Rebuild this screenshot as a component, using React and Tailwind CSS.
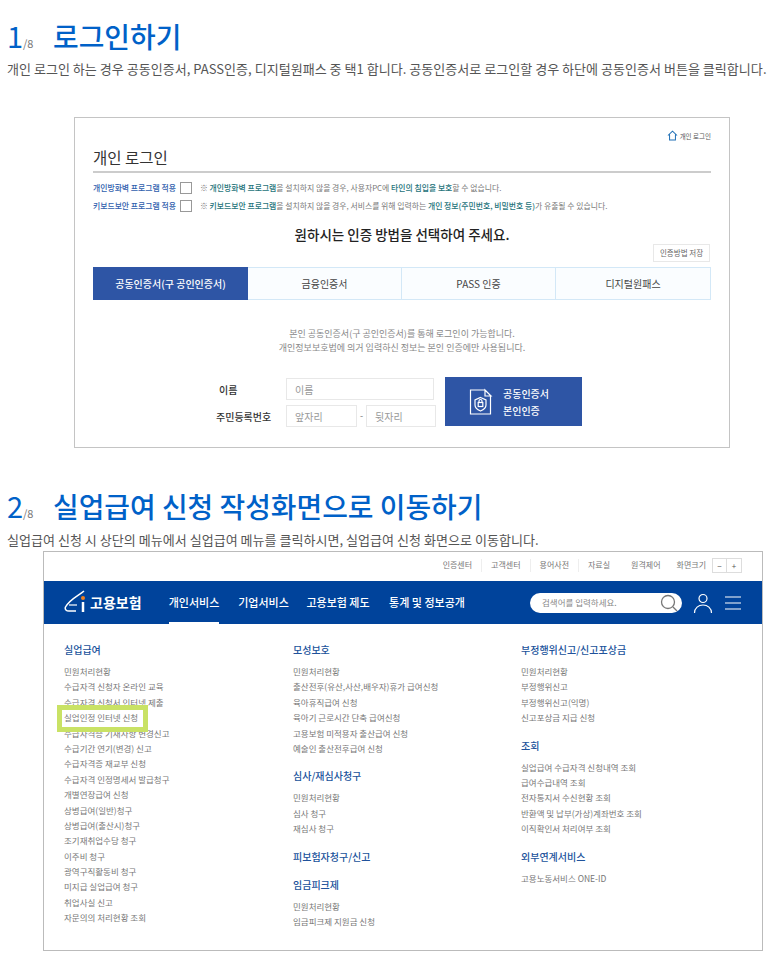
const font = { fontFamily: '"Noto Sans CJK KR", "Noto Sans", sans-serif' }

const columns = [
  [
    {
      title: '실업급여',
      items: [
        '민원처리현황',
        '수급자격 신청자 온라인 교육',
        '수급자격 신청서 인터넷 제출',
        '실업인정 인터넷 신청',
        '수급자격증 기재사항 변경신고',
        '수급기간 연기(변경) 신고',
        '수급자격증 재교부 신청',
        '수급자격 인정명세서 발급청구',
        '개별연장급여 신청',
        '상병급여(일반)청구',
        '상병급여(출산시)청구',
        '조기재취업수당 청구',
        '이주비 청구',
        '광역구직활동비 청구',
        '미지급 실업급여 청구',
        '취업사실 신고',
        '자문의의 처리현황 조회',
      ],
    },
  ],
  [
    {
      title: '모성보호',
      items: [
        '민원처리현황',
        '출산전후(유산,사산,배우자)휴가 급여신청',
        '육아휴직급여 신청',
        '육아기 근로시간 단축 급여신청',
        '고용보험 미적용자 출산급여 신청',
        '예술인 출산전후급여 신청',
      ],
    },
    { title: '심사/재심사청구', items: ['민원처리현황', '심사 청구', '재심사 청구'] },
    { title: '피보험자청구/신고', items: [] },
    { title: '임금피크제', items: ['민원처리현황', '임금피크제 지원금 신청'] },
  ],
  [
    {
      title: '부정행위신고/신고포상금',
      items: ['민원처리현황', '부정행위신고', '부정행위신고(익명)', '신고포상금 지급 신청'],
    },
    {
      title: '조회',
      items: [
        '실업급여 수급자격 신청내역 조회',
        '급여수급내역 조회',
        '전자통지서 수신현황 조회',
        '반환액 및 납부(가상)계좌번호 조회',
        '이직확인서 처리여부 조회',
      ],
    },
    { title: '외부연계서비스', items: ['고용노동서비스 ONE-ID'] },
  ],
]

function StepTitle({ num, title }) {
  return (
    <div className="flex items-baseline pl-[7px] text-[#0061c8]">
      <span className="w-[16px] text-[29px] leading-[38px]">{num}</span>
      <span className="w-[30px] text-[11px] text-[#777]">/8</span>
      <h2 className="text-[27.9px] font-medium leading-[38px] whitespace-nowrap">{title}</h2>
    </div>
  )
}

function NoticeRow({ label, children }) {
  return (
    <div className="flex h-[18px] items-center whitespace-nowrap text-[7.85px]">
      <span className="w-[87px] font-medium text-[#2f5ead]">{label}</span>
      <span className="h-[12px] w-[12px] border border-[#999] bg-white" />
      <span className="ml-[8px] text-[#777]">{children}</span>
    </div>
  )
}

function Mark({ children }) {
  return <b className="font-medium text-[#24737a]">{children}</b>
}

function Field({ placeholder, className }) {
  return (
    <div className={`flex h-[22px] items-center border border-[#e8e8e8] pl-[8px] text-[10px] text-[#999] ${className}`}>
      {placeholder}
    </div>
  )
}

function MenuGroup({ title, items }) {
  return (
    <div className="mb-[12px]">
      <h3 className="text-[10px] font-medium leading-[16px] text-[#20529b]">{title}</h3>
      {items.length > 0 && (
        <ul className="mt-[6px]">
          {items.map((item) => (
            <li key={item} className="h-[15.4px] whitespace-nowrap text-[8.5px] leading-[15.4px] text-[#777]">
              {item}
            </li>
          ))}
        </ul>
      )}
    </div>
  )
}

export default function App() {
  return (
    <div className="h-[957px] w-[783px] overflow-hidden bg-white" style={font}>
      <div className="pt-[16px]">
        <StepTitle num="1" title="로그인하기" />
        <p className="mt-[4px] whitespace-nowrap pl-[7px] text-[13.05px] leading-[20px] text-[#555]">
          개인 로그인 하는 경우 공동인증서, PASS인증, 디지털원패스 중 택1 합니다. 공동인증서로 로그인할 경우 하단에 공동인증서 버튼을 클릭합니다.
        </p>
      </div>

      <section className="ml-[74px] mt-[38px] h-[331px] w-[656px] border border-[#c4c4c4] px-[18px]">
        <div className="flex h-[24px] items-end justify-end gap-[2px] text-[6.5px] text-[#555]">
          <svg width="11" height="11" viewBox="0 0 12 12" fill="none" stroke="#1f6fb5" strokeWidth="1.1" className="mb-[1px]">
            <path d="M1 6 6 1.2 11 6M2.8 5v6h6.4V5" />
          </svg>
          <span className="leading-[12px]">개인 로그인</span>
        </div>
        <h2 className="mt-[3px] border-b-2 border-[#ccc] pb-[2px] text-[15.5px] leading-[24px] text-[#333]">개인 로그인</h2>

        <div className="mt-[6px]">
          <NoticeRow label="개인방화벽 프로그램 적용">
            ※ <Mark>개인방화벽 프로그램</Mark>을 설치하지 않을 경우, 사용자PC에 <Mark>타인의 침입을 보호</Mark>할 수 없습니다.
          </NoticeRow>
          <NoticeRow label="키보드보안 프로그램 적용">
            ※ <Mark>키보드보안 프로그램</Mark>을 설치하지 않을 경우, 서비스를 위해 입력하는 <Mark>개인 정보(주민번호, 비밀번호 등)</Mark>가 유출될 수 있습니다.
          </NoticeRow>
        </div>

        <p className="mt-[8px] text-center text-[13.5px] font-medium leading-[22px] text-[#222]">원하시는 인증 방법을 선택하여 주세요.</p>

        <div className="-mt-[1px] flex justify-end pr-px">
          <span className="flex h-[18px] w-[57px] items-center justify-center border border-[#e8e8e8] text-[7.5px] text-[#666]">인증방법 저장</span>
        </div>

        <div className="mt-[5px] grid h-[33px] grid-cols-[155px_154px_154px_155px] border-y border-[#d3e8f7] text-center text-[10px] leading-[31px] text-[#444]">
          <div className="-my-px h-[33px] bg-[#2e55a5] font-medium leading-[33px] text-white">공동인증서(구 공인인증서)</div>
          <div className="border-r border-[#d3e8f7] bg-[#fafdff]">금융인증서</div>
          <div className="border-r border-[#d3e8f7] bg-[#fafdff]">PASS 인증</div>
          <div className="border-r border-[#d3e8f7] bg-[#fafdff]">디지털원패스</div>
        </div>

        <div className="mt-[27px] text-center text-[9px] leading-[14px] text-[#888]">
          <p>본인 공동인증서(구 공인인증서)를 통해 로그인이 가능합니다.</p>
          <p>개인정보보호법에 의거 입력하신 정보는 본인 인증에만 사용됩니다.</p>
        </div>

        <div className="mt-[23px] flex">
          <div className="ml-[123px] w-[70px] text-[10px] font-medium text-[#333]">
            <div className="flex h-[22px] items-center pl-[3px]">이름</div>
            <div className="mt-[5px] flex h-[22px] items-center whitespace-nowrap">주민등록번호</div>
          </div>
          <div>
            <Field placeholder="이름" className="w-[148px]" />
            <div className="mt-[5px] flex items-center">
              <Field placeholder="앞자리" className="w-[71px]" />
              <span className="w-[9px] text-center text-[9px] text-[#777]">-</span>
              <Field placeholder="뒷자리" className="w-[70px]" />
            </div>
          </div>
          <button className="-mt-[1px] ml-[9px] flex h-[49px] w-[137px] items-center bg-[#2e55a5] pl-[24px] text-left text-[10px] font-medium leading-[17px] text-white">
            <svg width="24" height="28" viewBox="0 0 24 28" fill="none" stroke="white" strokeWidth="1.2" className="mr-[10px]">
              <path d="M16 2H1.5v24h20V8M16 2v6h6z" />
              <path d="M11.5 9.5 17 12v5c0 3-3 5-5.5 6C9 22 6 20 6 17v-5z" />
              <rect x="9.2" y="14.5" width="4.6" height="4" />
              <path d="M10 14.5v-1.5a1.5 1.5 0 0 1 3 0v1.5" />
            </svg>
            <span>
              공동인증서
              <br />
              본인인증
            </span>
          </button>
        </div>
      </section>

      <div className="mb-px mt-[38px]">
        <StepTitle num="2" title="실업급여 신청 작성화면으로 이동하기" />
        <p className="mt-[5px] whitespace-nowrap pl-[7px] text-[13.05px] leading-[20px] text-[#555]">
          실업급여 신청 시 상단의 메뉴에서 실업급여 메뉴를 클릭하시면, 실업급여 신청 화면으로 이동합니다.
        </p>
      </div>

      <section className="relative ml-[43px] h-[400px] w-[720px] border border-[#bbb]">
        <div className="flex h-[29px] items-center justify-end pb-[3px] pr-[20px] text-[8px] text-[#777]">
          <span>인증센터</span>
          <span className="mx-[9px] h-[13px] w-px bg-[#eee]" />
          <span>고객센터</span>
          <span className="mx-[9px] h-[13px] w-px bg-[#eee]" />
          <span>용어사전</span>
          <span className="mx-[9px] h-[13px] w-px bg-[#eee]" />
          <span>자료실</span>
          <span className="ml-[21px]">원격제어</span>
          <span className="ml-[16px]">화면크기</span>
          <span className="ml-[6px] flex h-[15px] w-[30px] border border-[#ddd] text-center leading-[13px] text-[#555]">
            <span className="w-1/2 border-r border-[#ddd]">−</span>
            <span className="w-1/2">+</span>
          </span>
        </div>

        <div className="flex h-[43px] items-center bg-[#00439b] text-white">
          <svg width="24" height="26" viewBox="0 0 24 26" fill="none" className="ml-[20px]">
            <path d="M20 1C14 6 6 9 1.5 17c-1 2.500 1 4 3.500 4h7" stroke="white" strokeWidth="1.5" />
            <path d="M5 15h8" stroke="white" strokeWidth="1.2" />
            <path d="M19 12v10" stroke="white" strokeWidth="2.500" />
            <circle cx="19" cy="8" r="2" fill="#f07f1f" />
          </svg>
          <span className="ml-[2px] w-[69px] text-[14px] font-bold">고용보험</span>
          <nav className="flex h-full text-[11px] font-medium leading-[43px]">
            <span className="relative w-[70px] text-center">
              개인서비스
              <span className="absolute bottom-0 left-[10px] h-[2px] w-[50px] bg-white" />
            </span>
            <span className="w-[69px] text-center">기업서비스</span>
            <span className="w-[80px] text-center">고용보험 제도</span>
            <span className="w-[98px] text-center">통계 및 정보공개</span>
          </nav>
          <div className="ml-[54px] flex h-[20px] w-[152px] items-center justify-between rounded-full bg-white pl-[12px] pr-[4px] text-[8.500px] text-[#888]">
            검색어를 입력하세요.
            <svg width="18" height="18" viewBox="0 0 18 18" fill="none" stroke="#777" strokeWidth="1.3">
              <circle cx="8" cy="8" r="6.500" />
              <path d="m13 13 4 4" />
            </svg>
          </div>
          <svg width="20" height="20" viewBox="0 0 20 20" fill="none" stroke="white" strokeWidth="1.2" className="ml-[11px]">
            <circle cx="10" cy="5.500" r="4" />
            <path d="M1.500 20c0-5 4-8 8.500-8s8.500 3 8.500 8" />
          </svg>
          <svg width="16" height="14" viewBox="0 0 16 14" stroke="white" strokeWidth="1.1" className="ml-[12px]">
            <path d="M0 1h16M0 7h16M0 13h16" />
          </svg>
        </div>

        <div className="grid grid-cols-[229px_228px_1fr] pl-[20px] pt-[18px]">
          {columns.map((groups) => (
            <div key={groups[0].title}>
              {groups.map((group) => (
                <MenuGroup key={group.title} title={group.title} items={group.items} />
              ))}
            </div>
          ))}
        </div>

        <div className="absolute left-[13px] top-[153px] h-[27px] w-[91px] border-[5px] border-[#c9e265]" />
      </section>
    </div>
  )
}
